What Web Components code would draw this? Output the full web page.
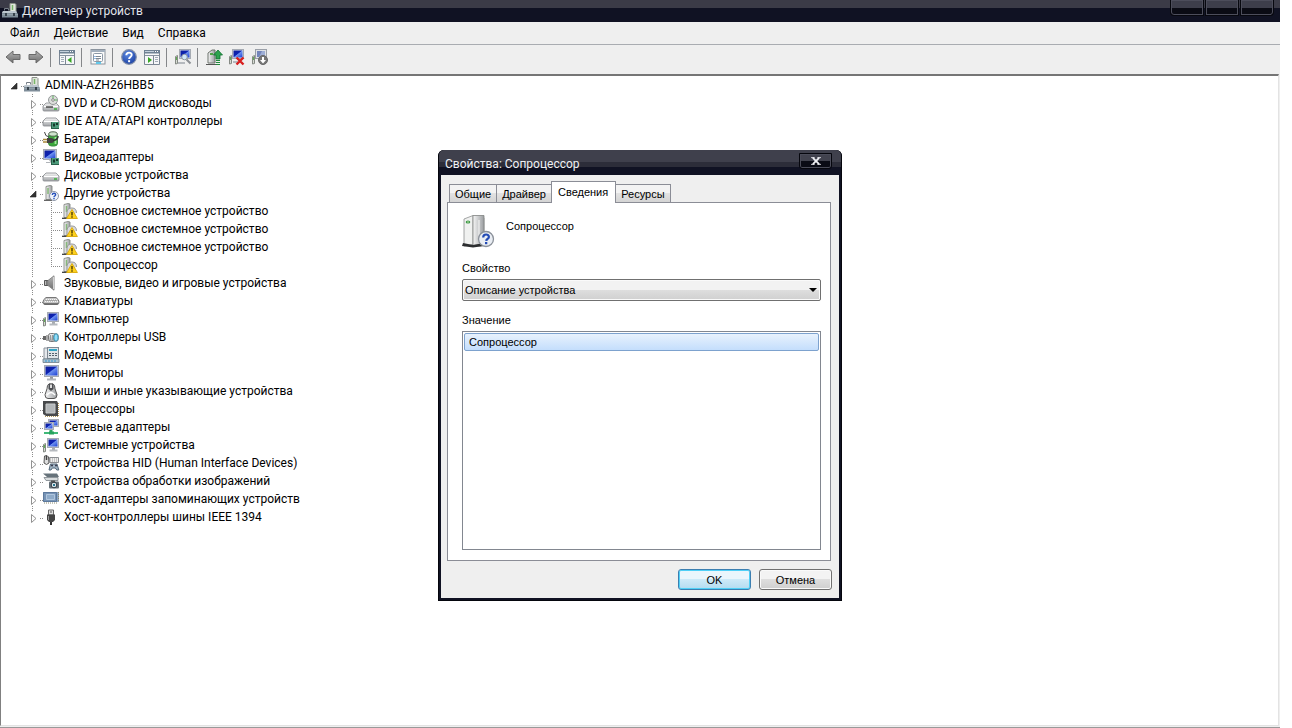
<!DOCTYPE html>
<html lang="ru">
<head>
<meta charset="utf-8">
<title>Диспетчер устройств</title>
<style>
  html, body { margin: 0; height: 100%; background: #fff; }
  body { font: 12px/18px Roboto, "Open Sans", sans-serif; color: #000; overflow: hidden; }
</style>
</head>
<body>
<app-window>
  <span slot="title">Диспетчер устройств</span>
  <menu-bar slot="menu">
    <menu-entry>Файл</menu-entry>
    <menu-entry>Действие</menu-entry>
    <menu-entry>Вид</menu-entry>
    <menu-entry>Справка</menu-entry>
  </menu-bar>
  <tool-bar slot="toolbar">
    <tool-button icon="back" label="Назад"></tool-button>
    <tool-button icon="forward" label="Вперед"></tool-button>
    <tool-separator></tool-separator>
    <tool-button icon="paneLeft" label="Дерево консоли"></tool-button>
    <tool-separator></tool-separator>
    <tool-button icon="props" label="Свойства"></tool-button>
    <tool-separator></tool-separator>
    <tool-button icon="help" label="Справка"></tool-button>
    <tool-button icon="paneRight" label="Область действий"></tool-button>
    <tool-separator></tool-separator>
    <tool-button icon="scan" label="Обновить конфигурацию"></tool-button>
    <tool-separator></tool-separator>
    <tool-button icon="update" label="Обновить драйверы"></tool-button>
    <tool-button icon="remove" label="Удалить"></tool-button>
    <tool-button icon="disable" label="Отключить"></tool-button>
  </tool-bar>
  <tree-item role="tree" root icon="computer" state="open">ADMIN-AZH26HBB5
    <tree-item slot="children" icon="dvd" state="closed">DVD и CD-ROM дисководы</tree-item>
    <tree-item slot="children" icon="ide" state="closed">IDE ATA/ATAPI контроллеры</tree-item>
    <tree-item slot="children" icon="battery" state="closed">Батареи</tree-item>
    <tree-item slot="children" icon="video" state="closed">Видеоадаптеры</tree-item>
    <tree-item slot="children" icon="disk" state="closed">Дисковые устройства</tree-item>
    <tree-item slot="children" icon="other" state="open">Другие устройства
      <tree-item slot="children" icon="warn">Основное системное устройство</tree-item>
      <tree-item slot="children" icon="warn">Основное системное устройство</tree-item>
      <tree-item slot="children" icon="warn">Основное системное устройство</tree-item>
      <tree-item slot="children" icon="warn" last>Сопроцессор</tree-item>
    </tree-item>
    <tree-item slot="children" icon="sound" state="closed">Звуковые, видео и игровые устройства</tree-item>
    <tree-item slot="children" icon="keyboard" state="closed">Клавиатуры</tree-item>
    <tree-item slot="children" icon="pc" state="closed">Компьютер</tree-item>
    <tree-item slot="children" icon="usb" state="closed">Контроллеры USB</tree-item>
    <tree-item slot="children" icon="modem" state="closed">Модемы</tree-item>
    <tree-item slot="children" icon="monitor" state="closed">Мониторы</tree-item>
    <tree-item slot="children" icon="mouse" state="closed">Мыши и иные указывающие устройства</tree-item>
    <tree-item slot="children" icon="cpu" state="closed">Процессоры</tree-item>
    <tree-item slot="children" icon="network" state="closed">Сетевые адаптеры</tree-item>
    <tree-item slot="children" icon="pc" state="closed">Системные устройства</tree-item>
    <tree-item slot="children" icon="hid" state="closed">Устройства HID (Human Interface Devices)</tree-item>
    <tree-item slot="children" icon="imaging" state="closed">Устройства обработки изображений</tree-item>
    <tree-item slot="children" icon="storage" state="closed">Хост-адаптеры запоминающих устройств</tree-item>
    <tree-item slot="children" icon="firewire" state="closed" last>Хост-контроллеры шины IEEE 1394</tree-item>
  </tree-item>
  <property-dialog slot="dialog" device="Сопроцессор">
    <dialog-tab slot="tabs">Общие</dialog-tab>
    <dialog-tab slot="tabs">Драйвер</dialog-tab>
    <dialog-tab slot="tabs" selected>Сведения</dialog-tab>
    <dialog-tab slot="tabs">Ресурсы</dialog-tab>
    <dialog-button slot="actions" primary>OK</dialog-button>
    <dialog-button slot="actions">Отмена</dialog-button>
  </property-dialog>
</app-window>

<script>
const DEFS = `<defs>
<linearGradient id="metal" x1="0" y1="0" x2="0" y2="1"><stop offset="0" stop-color="#f4f4f4"/><stop offset="1" stop-color="#a2a5a8"/></linearGradient>
<linearGradient id="side" x1="0" y1="0" x2="1" y2="0"><stop offset="0" stop-color="#f6f6f6"/><stop offset="1" stop-color="#9a9da0"/></linearGradient>
<linearGradient id="blue" x1="0" y1="0" x2="1" y2="1"><stop offset="0" stop-color="#10209a"/><stop offset=".45" stop-color="#0c22b4"/><stop offset=".52" stop-color="#6d90ee"/><stop offset="1" stop-color="#1a3fd6"/></linearGradient>
<linearGradient id="dark" x1="0" y1="0" x2="0" y2="1"><stop offset="0" stop-color="#b4b4b4"/><stop offset="1" stop-color="#6c6c6c"/></linearGradient>
<radialGradient id="orb" cx=".4" cy=".3" r=".8"><stop offset="0" stop-color="#5a88e0"/><stop offset="1" stop-color="#173b9e"/></radialGradient>
</defs>`;

const screenAt = (x, y, w, h) =>
  `<rect x="${x}.5" y="${y}.5" width="${w - 1}" height="${h - 1}" fill="#dcdfe4" stroke="#a6abb3"/><rect x="${x + 1.5}" y="${y + 1.5}" width="${w - 3}" height="${h - 3}" fill="url(#blue)"/>`;
const towerSmall = `<path d="M.5 7.500l2-1v8l-2 .5z" fill="#d5d9d2" stroke="#858a84"/><path d="M1.500 8v3" stroke="#5fae52"/>`;
const pcBase = `${towerSmall}${screenAt(4, 1, 12, 10)}<path d="M9 11h3v2H9z" fill="#a7abb0"/><path d="M6.500 13.500h8" stroke="#b6babf" stroke-width="2"/>`;
const drive = y => `<path d="M3 ${y}h10l3 3v4q0 1-1 1H1q-1 0-1-1v-4z" fill="url(#metal)" stroke="#85898d" stroke-width=".8"/><path d="M1 ${y + 3.500}h14" stroke="#fff"/><path d="M11 ${y + 6}h3" stroke="#3bb53b" stroke-width="1.500"/>`;
const chip = `<path d="M8 9h8v6H8z" fill="#4c9a7a"/><path d="M10 10.500h2v3h-2zM13 10h2v2h-2z" fill="#16382c"/><path d="M8.500 9v7M8 15.500h8" stroke="#27604a"/>`;
const tower = `<path d="M3 1.500l4-1 2 .5v13.500H3z" fill="url(#side)" stroke="#858983" stroke-width=".9"/><path d="M5 3v6" stroke="#86b879" stroke-width="1.500"/><path d="M1 15.300h8" stroke="#555" stroke-width="1.200"/>`;
const pane = `<path d="M0 .5h16v14H0z" fill="#f6f7f9"/><path d="M.5 1v13.500h15V1" fill="none" stroke="#7c8794"/><path d="M0 0h16v3.500H0z" fill="#6f8193"/><path d="M1 1.500h9" stroke="#c4d0dc"/><path d="M11 1.500h1M13 1.500h1" stroke="#fff"/><path d="M1 5.500h14" stroke="#8893a0"/>`;

const ICONS = {
  back: `<path d="M1 8l7-6v3.500h7v5H8V14z" fill="url(#dark)" stroke="#6a6a6a"/>`,
  forward: `<path d="M15 8L8 2v3.500H1v5h7V14z" fill="url(#dark)" stroke="#6a6a6a"/>`,
  paneLeft: `<g transform="translate(0 1)">${pane}<path d="M6.500 6v8" stroke="#7c8794"/><path d="M2 7.500h3M2 9.500h3M2 11.500h3" stroke="#a2acb8"/><path d="M12.500 7v6L8.500 10z" fill="#38a624"/></g>`,
  paneRight: `<g transform="translate(0 1)">${pane}<path d="M9.500 6v8" stroke="#7c8794"/><path d="M11 7.500h3M11 9.500h3M11 11.500h3" stroke="#a2acb8"/><path d="M4 7v6l4-3z" fill="#38a624"/></g>`,
  props: `<rect x="1" y=".5" width="14" height="14.500" fill="#fafafa" stroke="#8b949e"/><path d="M1 2h14" stroke="#a3b0be" stroke-width="2"/><rect x="3.500" y="4.500" width="9" height="8" rx="1" fill="#fff" stroke="#8b98a6"/><path d="M6 7.500h5M6 9.500h5M6 11h3" stroke="#7d8894"/><path d="M4.500 7.500h1M4.500 9.500h1" stroke="#2474cc"/><path d="M6 14h5" stroke="#62c8ea" stroke-width="2"/>`,
  help: `<circle cx="8" cy="8" r="7.300" fill="url(#orb)" stroke="#8390aa" stroke-width="1.200"/><path d="M5.300 6.200C5.400 2.800 10.900 2.900 10.700 6c-.1 1.900-2.600 2-2.600 4" fill="none" stroke="#fff" stroke-width="1.900"/><path d="M7.100 11.200h2v2h-2z" fill="#fff"/>`,
  scan: `${towerSmall}${screenAt(4, 0, 12, 10)}<path d="M3 14h7" stroke="#b5b9be" stroke-width="2"/><circle cx="9.500" cy="8" r="2.800" fill="#cfe6f8" stroke="#8d959e"/><path d="M11.500 10.500l4 4" stroke="#8b8f94" stroke-width="2"/>`,
  update: `<path d="M2 4l4-3h3v13H2z" fill="url(#side)" stroke="#6f746e"/><path d="M4 5h3" stroke="#4ea644" stroke-width="2"/><path d="M0 15.500h10" stroke="#555"/><path d="M12 1l4.500 5H14v4h-4V6H7.500z" fill="#2ea34e" stroke="#0e702d" stroke-width=".8"/><path d="M10 11.500h4M10 13.500h4M10 15.500h4" stroke="#218a3c"/>`,
  remove: `${towerSmall}${screenAt(3, 0, 12, 10)}<path d="M4 13h5" stroke="#b5b9be" stroke-width="2"/><path d="M7.500 8.500l7 7M14.500 8.500l-7 7" stroke="#d81e1e" stroke-width="2.400"/>`,
  disable: `${towerSmall}<rect x="3.500" y=".5" width="11" height="9" fill="#dfe2e7" stroke="#9ba0a8"/><path d="M5 2h8v6H5z" fill="#9eaed6"/><path d="M5 2h5L7 8H5z" fill="#7384bb"/><circle cx="11" cy="11" r="4.500" fill="#777" stroke="#666"/><path d="M10 8h2v3h2l-3 3.500L8 11h2z" fill="#fff"/>`,
  computer: `<path d="M8 .5h5l1 1V9H8z" fill="#dfe5dc" stroke="#8b9189"/><path d="M10.500 2v5" stroke="#78b668" stroke-width="1.500"/><path d="M2.500 7.500v-2h4v2" fill="none" stroke="#777e86"/><path d="M1 8h13l2 3v3.500H0V10z" fill="#7f8d99"/><path d="M1 8h13l1 2H0z" fill="#bcc6ce"/><path d="M0 11.500h16" stroke="#94a1ab"/><path d="M3 10h2v3H3zM11 10h2v3h-2z" fill="#38434c"/>`,
  dvd: `${drive(8)}<circle cx="10" cy="5" r="4.500" fill="#dcdedc" stroke="#95999a"/><path d="M10 .8v3M14 5h-3" stroke="#5db85d"/><circle cx="10" cy="5" r="1.300" fill="#fff" stroke="#888"/><path d="M3 12h7" stroke="#333" stroke-width="1.300"/>`,
  ide: `${drive(5)}${chip}`,
  battery: `<rect x="5.500" y="2.500" width="9" height="12.500" rx="3" fill="#3aa83a" stroke="#3c8a42"/><ellipse cx="10" cy="3" rx="4.300" ry="2.200" fill="#cfe3cd" stroke="#526651"/><path d="M12.500 6v7" stroke="#a3e79c" stroke-width="1.800"/><path d="M1.500 1q.5 4.500 4.500 5" fill="none" stroke="#444"/><path d="M4 7h4q3 0 3 2.500T8 12H4z" fill="#434343"/><path d="M0 8.500h4M0 11h4" stroke="#a9893a" stroke-width="1.500"/><path d="M10 9.500q5-.5 5-4.500" fill="none" stroke="#333" stroke-width="1.500"/>`,
  video: `${screenAt(0, 0, 14, 11)}<path d="M6 11h3v2H3v1h5" fill="#b0b4b9"/>${chip}`,
  disk: drive(6),
  other: `${tower}<circle cx="11" cy="11" r="4.500" fill="#eef3fb" stroke="#8d96a7"/><path d="M9.300 10C9.300 7.600 12.700 7.800 12.600 9.700c0 1.300-1.600 1.200-1.600 2.300" fill="none" stroke="#2550ba" stroke-width="1.400"/><path d="M10.300 12.800h1.400v1.400h-1.400z" fill="#2550ba"/>`,
  warn: `<path d="M2 1.500l4-1 2 .5v13.500H2z" fill="url(#side)" stroke="#858983" stroke-width=".9"/><path d="M4.500 3v6" stroke="#86b879" stroke-width="1.500"/><path d="M0 15.300h7" stroke="#333" stroke-width="1.200"/><path d="M5 14V9q0-4 4-4h1q4.500 0 4.500 5" fill="#d8d9db" stroke="#9b9c9f"/><path d="M10 6.500l5.400 9H4.600z" fill="#ffd21c" stroke="#dcae14" stroke-linejoin="round"/><path d="M10 9v3.500M10 13.300v1.400" stroke="#3c2d00" stroke-width="1.300"/>`,
  sound: `<path d="M1.500 5.500h4v5h-4z" fill="#777" stroke="#555"/><path d="M5 5.500L11 .8v14.400L5 10.500z" fill="url(#dark)" stroke="#8a8a8a"/><path d="M10.500 2v12" stroke="#d4d4d4"/><path d="M2.500 6v4" stroke="#bbb"/>`,
  keyboard: `<path d="M3 4.500h10q3 2 3 4.500 0 2.500-2 2.500H2Q0 11.500 0 9q0-2.500 3-4.500z" fill="#c5c5c5" stroke="#777"/><path d="M3 6.500h11M2 8.500h13" stroke="#f6f6f6" stroke-dasharray="1 1"/><path d="M2.500 7.500h12" stroke="#888" stroke-dasharray="1 1"/><path d="M1 10.800h14" stroke="#555"/>`,
  pc: pcBase,
  usb: `<path d="M0 7h4v4H0z" fill="#666"/><path d="M3 6h2v6H3z" fill="#aaa"/><rect x="5.500" y="4.500" width="7" height="8" rx="2" fill="url(#metal)" stroke="#777"/><path d="M7.500 6v5M9.500 6v5" stroke="#999"/><ellipse cx="13" cy="8.500" rx="2.500" ry="4" fill="#58c3ea" stroke="#5b8797"/><path d="M13 6v5" stroke="#d1f4ff"/>`,
  modem: `<path d="M1 1h4v11H1z" fill="#e5e8ec" stroke="#8a9098"/><rect x="4.500" y=".5" width="11" height="11" fill="#dfe4e8" stroke="#7f8993"/><path d="M6 3h8" stroke="#31a4c4" stroke-width="2"/><path d="M6 6.500h8M6 8.500h8" stroke="#53616e" stroke-dasharray="2 1"/><path d="M0 12h16v3.500H0z" fill="#abc4d2" stroke="#6c7d89" stroke-width=".8"/><path d="M2 14h12" stroke="#3296d0" stroke-dasharray="2 1"/>`,
  monitor: `${screenAt(1, 0, 15, 12)}<path d="M7 12h3v2H7z" fill="#92969b"/><path d="M4 14.500h9" stroke="#b1b5ba" stroke-width="2"/>`,
  mouse: `<path d="M6 .8h4q2 1 2 5l2 6q0 3.700-3 3.700H5q-3 0-3-3.700l2-6q0-4 2-5z" fill="url(#side)" stroke="#555"/><path d="M5.500 1h5v5L8 8 5.500 6z" fill="#4a4c50"/><rect x="7" y="1.500" width="2" height="3.500" fill="#ddd"/><path d="M4 12q4-5 8 0" fill="none" stroke="#fff" stroke-width="1.500"/>`,
  cpu: `<path d="M0 0h14l1 2v13H3l-3-2z" fill="#484a4c"/><path d="M3 3h9v9H3z" fill="#b3b7b9" stroke="#c9cccd"/><path d="M15.500 2v13M2 15.500h13" stroke="#b39a5b" stroke-dasharray="1 1"/>`,
  network: `${screenAt(5, 0, 11, 8)}${screenAt(1, 3, 10, 8)}<path d="M8 11v3" stroke="#2ba765" stroke-width="3"/><path d="M1 14h14" stroke="#41b979" stroke-width="2"/><path d="M6 12.500h5v3H6z" fill="#27a35d"/>`,
  hid: `<path d="M1.500 1q3-1.500 4 1l.5 6q-2.500 3-5 0z" fill="#ddd" stroke="#555"/><path d="M3.500 1v4" stroke="#444" stroke-width="1.500"/><path d="M6.500 2.500h9v5h-9z" fill="#eee" stroke="#8a8d91"/><path d="M7 4h8M7 6h8" stroke="#999" stroke-dasharray="1 1"/><path d="M6 15l1.500-6H14l1.800 6h-2l-1.500-2h-3L8 15z" fill="#a2b5c5" stroke="#52677a"/><circle cx="9" cy="10.500" r="1" fill="#334"/><circle cx="13" cy="10.500" r="1" fill="#334"/>`,
  imaging: `<path d="M0 .5h14l2 3.500H4z" fill="#66727a"/><path d="M1 4.500h14v3H3z" fill="#d8dcde" stroke="#798087" stroke-width=".8"/><rect x="6" y="8.500" width="10" height="7" rx="1" fill="#656f77"/><path d="M8 7.500h4v2H8z" fill="#555"/><circle cx="11" cy="12" r="2.800" fill="#eaf2f6" stroke="#2d373e"/><circle cx="11" cy="12" r="1.200" fill="#26748e"/>`,
  storage: `<path d="M0 1h16v10H0z" fill="#91a9c4"/><path d="M.5 1.500h13v9H.5z" fill="#7693b5" stroke="#5c799d"/><path d="M3.500 3.500h8v5h-8z" fill="#8fabc9" stroke="#b0c6de"/><path d="M15.500 1v10M1 12h14" stroke="#8d8b6e" stroke-dasharray="1 1"/>`,
  firewire: `<path d="M5.500 1h5v5h-5z" fill="#ddd" stroke="#666"/><path d="M7 3h2" stroke="#555"/><path d="M4 5.500h8V11l-2 2H6l-2-2z" fill="#444"/><path d="M5.500 7v4" stroke="#999"/><path d="M8 13v3" stroke="#333" stroke-width="2"/>`,
  device: `<path d="M4 4l10-3 9 2v27l-5 2L3 29z" fill="#d6d8d8"/><path d="M2 4l9-3.500v29L2 31z" fill="#f0f1f0" stroke="#8e9190" stroke-width=".8"/><path d="M11 .5h11v28.500l-11 1.500z" fill="url(#side)" stroke="#808382" stroke-width=".8"/><path d="M17 5v22" stroke="#fafafa"/><path d="M1 28l10 2 11-2v3l-11 1.500L0 31z" fill="#2c2e30"/><ellipse cx="6" cy="7" rx="2.300" ry="1.500" fill="#3d9747"/><path d="M5 7h2" stroke="#b8e5a7"/><circle cx="24" cy="24" r="7.500" fill="#e9edf3" stroke="#8b919a" stroke-width="1.300"/><path d="M21.200 22.500C21.200 18.500 27 18.700 26.900 21.900c0 2-2.600 2-2.700 4" fill="none" stroke="#244bb5" stroke-width="2.200"/><path d="M23 27h2.300v2.200H23z" fill="#244bb5"/>`
};

const define = (name, css, html, setup) => {
  const template = document.createElement('template');
  template.innerHTML = `<style>*{box-sizing:border-box}${css}</style>${html}`;
  customElements.define(name, class extends HTMLElement {
    connectedCallback() {
      if (this.shadowRoot) return;
      this.attachShadow({ mode: 'open' }).append(template.content.cloneNode(true));
      if (setup) setup(this, this.shadowRoot);
    }
  });
};

define('ui-icon', `:host{display:block;width:16px;height:16px;flex:none}:host([large]){width:32px;height:34px}svg{display:block;width:100%;height:100%;overflow:visible}`, '',
  (el, root) => {
    const box = el.hasAttribute('large') ? '0 0 32 34' : '0 0 16 16';
    root.innerHTML += `<svg viewBox="${box}" aria-hidden="true">${DEFS}${ICONS[el.getAttribute('name')]}</svg>`;
  });

define('app-window', `
  :host{display:block;position:relative;height:100vh;padding-right:12px;box-sizing:border-box}
  .frame{display:flex;flex-direction:column;height:100%;position:relative;background:#efefef;border-bottom:1px solid #999}
  header{display:flex;align-items:center;justify-content:space-between;height:22px;color:#e2e4ea;background:linear-gradient(#3b3b47 0 8px,#101223 8px)}
  h1{display:flex;align-items:center;gap:4px;margin:0;padding-left:2px;font:inherit}
  .controls{display:flex;align-self:flex-start;gap:1px;padding-right:6px}
  .controls button{width:34px;height:16px;padding:0;border:1px solid #07080f;border-top:0;background:linear-gradient(#3d3e4b 0 8px,#0a0b14 8px);box-shadow:inset 0 0 0 1px #4c4d5b}
  .controls button:first-child{border-bottom-left-radius:4px}
  .controls button:last-child{border-bottom-right-radius:4px}
  main{flex:1;min-height:0;overflow:hidden;background:#fff;border:1px solid #e3e3e3;border-left:1px solid #808080;border-top:2px solid #757575;margin:0 1px 1px 0;padding-left:4px}`,
  `<div class="frame"><header><h1><ui-icon name="computer"></ui-icon><slot name="title"></slot></h1>
   <div class="controls"><button aria-label="Свернуть"></button><button aria-label="Развернуть"></button><button aria-label="Закрыть"></button></div></header>
   <slot name="menu"></slot><slot name="toolbar"></slot><main><slot></slot></main><slot name="dialog"></slot></div>`);

define('menu-bar', `:host{display:flex;height:23px;padding-left:3px;border-bottom:1px solid #a9acb1;box-sizing:border-box}`, `<slot></slot>`);
define('menu-entry', `:host{display:block}button{font:inherit;color:inherit;background:none;border:0;height:22px;padding:0 7px}`, `<button><slot></slot></button>`);
define('tool-bar', `:host{display:flex;align-items:center;height:29px;padding:0 0 5px 1px;box-sizing:border-box}`, `<slot></slot>`);
define('tool-button', `:host{display:block}button{display:flex;align-items:center;justify-content:center;width:23px;height:22px;padding:0;border:0;background:none}`, `<button></button>`,
  (el, root) => {
    const button = root.querySelector('button');
    button.setAttribute('aria-label', el.getAttribute('label'));
    button.innerHTML = `<ui-icon name="${el.getAttribute('icon')}"></ui-icon>`;
  });
define('tool-separator', `:host{display:block;width:1px;height:19px;margin:0 4px 0 3px;background:#85878a}`, ``);

define('tree-item', `
  :host{display:block;background:linear-gradient(#8c8c8c 50%,transparent 50%) 8px 0/1px 2px repeat-y}
  :host([root]){background:none}
  .row{display:flex;align-items:center;height:18px;white-space:nowrap}
  .cell{flex:none;width:19px;height:18px;background:linear-gradient(90deg,#8c8c8c 50%,transparent 50%) 10px 10px/2px 1px repeat-x;background-clip:content-box;padding-left:10px}
  .cell svg{display:block;margin-left:-10px;width:16px;height:18px}
  .text{padding-left:5px}
  .kids{padding-left:19px}`,
  `<div class="row"><span class="cell"></span><span class="text"><slot></slot></span></div><div class="kids" role="group"><slot name="children"></slot></div>`,
  (el, root) => {
    const state = el.getAttribute('state');
    if (!el.hasAttribute('root')) el.setAttribute('role', 'treeitem');
    const icon = document.createElement('ui-icon');
    icon.setAttribute('name', el.getAttribute('icon'));
    const cell = root.querySelector('.cell');
    cell.after(icon);
    const arrows = {
      closed: '<path d="M6 3h10v13H6z" fill="#fff"/><path d="M7.500 6.500v8l4.500-4z" fill="#fff" stroke="#929292"/>',
      open: '<path d="M5 5h10v10H5z" fill="#fff"/><path d="M12 7v6H6z" fill="#333" stroke="#222" stroke-width=".6"/>'
    };
    const lineEnd = !el.hasAttribute('last') ? '' : state ? '<path d="M6 15h6v3H6z" fill="#fff"/>' : '<path d="M7 11h3v7H7z" fill="#fff"/>';
    cell.innerHTML = `<svg viewBox="0 0 16 18" aria-hidden="true">${arrows[state] || ''}${lineEnd}</svg>`;
  });

define('dialog-tab', `
  :host{display:block;margin-right:-1px}
  button{font:inherit;color:inherit;display:block;height:18px;padding:0 5px;border:1px solid #8b8d96;border-bottom:0;background:linear-gradient(#f3f3f3 0 50%,#e2e2e2 50%,#d4d4d4)}
  :host([selected]){z-index:1;margin-bottom:-1px}
  :host([selected]) button{height:22px;padding:0 7px 2px 6px;background:#fff}`,
  `<button role="tab"><slot></slot></button>`,
  (el, root) => root.querySelector('button').setAttribute('aria-selected', el.hasAttribute('selected')));

define('dialog-button', `
  :host{display:block}
  button{font:inherit;color:inherit;width:73px;height:21px;padding:0;border:1px solid #707070;border-radius:3px;background:linear-gradient(#f3f3f3 0 50%,#dedede 50%,#cfcfcf);box-shadow:inset 0 0 0 1px #fafafa}
  :host([primary]) button{border-color:#3c7fb1;background:linear-gradient(#eaf6fc 0 50%,#cdeaf8 50%,#b3dcf0);box-shadow:inset 0 0 0 1px #4fd0f7}`,
  `<button><slot></slot></button>`);

define('property-dialog', `
  :host{display:block;position:absolute;left:calc(50% - 202px);top:150px;width:404px;box-sizing:border-box;padding:0 3px 3px;border-radius:6px 6px 0 0;background:#101223;font:11px/16px "Liberation Sans",sans-serif;box-shadow:inset 0 0 0 1px #05060d}
  header{display:flex;justify-content:space-between;margin:0 -2px;padding:1px 9px 0 6px;height:25px;border-radius:5px 5px 0 0;color:#f0f1f5;background:linear-gradient(#3f404c 0 12px,#2c2d39 12px 17px,#101223 17px)}
  h2{margin:0;padding-top:5px;font:12px/16px Roboto,"Open Sans",sans-serif}
  header button{display:flex;align-items:center;justify-content:center;width:33px;height:16px;margin-top:2px;padding:0;border:1px solid #05060d;border-radius:0 0 3px 3px;background:linear-gradient(#41424e 0 50%,#0a0b15 50%);box-shadow:inset 0 0 0 1px #4a4b58}
  .body{background:#efefef;padding:7px 7px 8px 6px}
  .tabs{display:flex;align-items:flex-end;height:20px;padding-left:2px}
  .panel{border:1px solid #8b8d96;background:#fff;padding:12px 9px 10px 14px;margin-right:1px}
  .device{display:flex;gap:12px;height:45px}
  .device p{margin:3px 0 0}
  label,.caption{display:block;height:16px}
  .pick{position:relative;margin:3px 0 11px}
  .pick svg{position:absolute;right:4px;top:9px;pointer-events:none}
  select{display:block;width:100%;height:22px;padding:0 20px 0 2px;font:inherit;color:inherit;appearance:none;border:1px solid #707070;border-radius:2px;background:linear-gradient(#f2f2f2 0 50%,#dedede 50%,#d0d0d0);box-shadow:inset 0 0 0 1px #fafafa}
  ul{list-style:none;margin:3px 0 0;padding:1px;min-height:219px;border:1px solid #828790}
  li{height:18px;padding-left:4px;border:1px solid #7da2ce;border-radius:2px;background:linear-gradient(#e8f2fd,#c4defc);line-height:17px}
  footer{display:flex;justify-content:flex-end;gap:8px;padding-top:8px}`,
  `<header><h2>Свойства: Сопроцессор</h2><button aria-label="Закрыть"><svg width="10" height="8" viewBox="0 0 11 9"><path d="M2 1l7 7M9 1L2 8" stroke="#f1f2f6" stroke-width="2"/><path d="M0 .7h4M7 .7h4M0 8.300h4M7 8.300h4" stroke="#f1f2f6"/></svg></button></header>
   <div class="body"><div class="tabs" role="tablist"><slot name="tabs"></slot></div>
   <div class="panel" role="tabpanel"><div class="device"><ui-icon large name="device"></ui-icon><p></p></div>
   <label for="property">Свойство</label>
   <div class="pick"><select id="property"><option>Описание устройства</option></select><svg width="8" height="4" viewBox="0 0 8 4"><path d="M0 0h8L4 4z"/></svg></div>
   <span class="caption" id="value">Значение</span>
   <ul role="listbox" aria-labelledby="value"><li role="option" aria-selected="true"></li></ul></div>
   <footer><slot name="actions"></slot></footer></div>`,
  (el, root) => {
    el.setAttribute('role', 'dialog');
    root.querySelector('p').textContent = root.querySelector('li').textContent = el.getAttribute('device');
  });
</script>
</body>
</html>
